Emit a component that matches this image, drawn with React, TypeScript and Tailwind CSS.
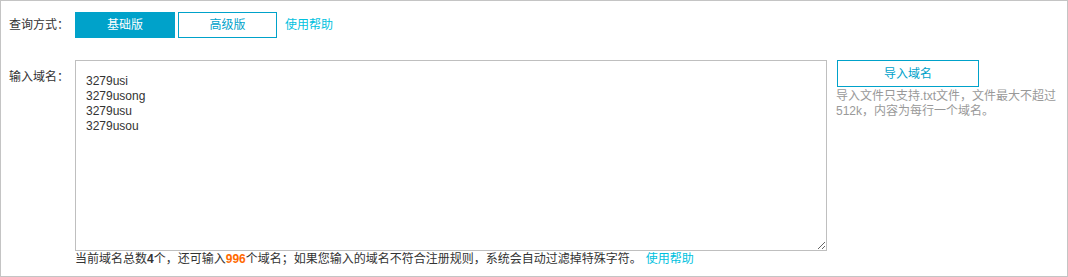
import React, { useState } from 'react'

const font = { fontFamily: '"Liberation Sans", "Noto Sans CJK SC", sans-serif' }

const App: React.FC = () => {
  const [mode, setMode] = useState<'basic' | 'advanced'>('basic')
  const [domains, setDomains] = useState('3279usi\n3279usong\n3279usu\n3279usou')
  const count = domains.split('\n').filter((d) => d.trim() !== '').length

  return (
    <div
      className="w-[1068px] h-[277px] border border-[#c4c4c4] bg-white text-[12px] text-[#333] overflow-hidden"
      style={font}
    >
      {/* 查询方式 */}
      <div className="flex items-center pt-[11px]">
        <div className="w-[74px] pl-2 leading-[26px]">查询方式：</div>
        <button
          onClick={() => setMode('basic')}
          className={`w-[100px] h-[26px] text-[12px] ${
            mode === 'basic' ? 'bg-[#00a2ca] text-white' : 'border border-[#00a2ca] text-[#00a2ca]'
          }`}
        >
          基础版
        </button>
        <button
          onClick={() => setMode('advanced')}
          className={`ml-[3px] w-[99px] h-[26px] text-[12px] ${
            mode === 'advanced' ? 'bg-[#00a2ca] text-white' : 'border border-[#00a2ca] text-[#00a2ca]'
          }`}
        >
          高级版
        </button>
        <a className="ml-2 text-[#00c1de] cursor-pointer">使用帮助</a>
      </div>

      {/* 输入域名 */}
      <div className="flex pt-[22px]">
        <div className="w-[74px] pl-2 pt-[10px] leading-[15px]">输入域名：</div>
        <div className="flex flex-col">
          <textarea
            value={domains}
            onChange={(e) => setDomains(e.target.value)}
            className="block w-[752px] h-[191px] border border-[#bfbfbf] pl-[10px] pt-[13px] leading-[15px] text-[12px] text-[#333] outline-none"
            style={font}
          />
          <div className="leading-[15px] mt-[1px] whitespace-nowrap">
            当前域名总数<b className="text-[#333]">{count}</b>个，还可输入
            <b className="text-[#ff6a00]">{1000 - count}</b>
            个域名；如果您输入的域名不符合注册规则，系统会自动过滤掉特殊字符。
            <a className="ml-[4px] text-[#00c1de] cursor-pointer">使用帮助</a>
          </div>
        </div>
        <div className="ml-[9px] flex flex-col">
          <button className="ml-[1px] w-[142px] h-[27px] border border-[#00a2ca] text-[#00a2ca] text-[12px]">
            导入域名
          </button>
          <p className="mt-[2px] leading-[15px] text-[#999] whitespace-nowrap">
            导入文件只支持.txt文件，文件最大不超过
            <br />
            512k，内容为每行一个域名。
          </p>
        </div>
      </div>
    </div>
  )
}

export default App
